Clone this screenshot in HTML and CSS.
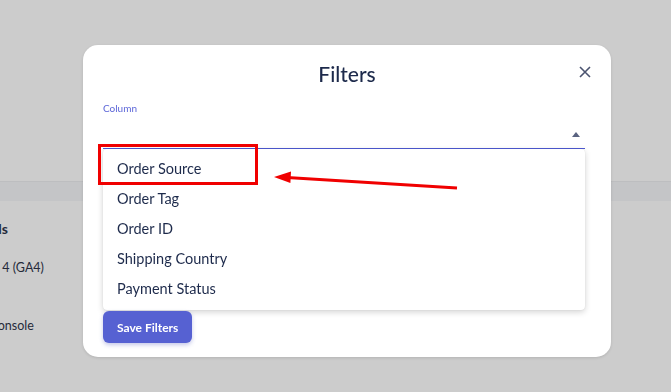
FILE: index.html
```html
<!DOCTYPE html>
<html lang="en">
<head>
    <meta charset="UTF-8">
    <meta name="viewport" content="width=device-width, initial-scale=1.0">
    <title>Filters</title>
    <link rel="stylesheet" href="styles.css">
</head>
<body>
    <div class="page">
        <div class="page-top"></div>
        <div class="page-band"></div>
        <div class="page-content">
            <h3 class="side-title">Analytics Tools</h3>
            <p class="side-item">Google Analytics 4 (GA4)</p>
            <p class="side-item side-item-last">Google Search Console</p>
        </div>
    </div>

    <div class="overlay">
        <div class="modal">
            <div class="modal-head">
                <h2 class="title">Filters</h2>
                <button class="close" aria-label="Close">
                    <svg width="12" height="12" viewBox="0 0 12 12">
                        <path d="M1 1 L11 11 M11 1 L1 11" stroke="#4b5470" stroke-width="1.6" fill="none"/>
                    </svg>
                </button>
            </div>

            <label class="field-label">Column</label>
            <div class="field">
                <span class="caret"></span>
            </div>

            <ul class="menu">
                <li class="menu-item">Order Source</li>
                <li class="menu-item">Order Tag</li>
                <li class="menu-item">Order ID</li>
                <li class="menu-item">Shipping Country</li>
                <li class="menu-item">Payment Status</li>
            </ul>

            <button class="button">Save Filters</button>
        </div>

        <!-- annotation -->
        <div class="mark"></div>
        <svg class="arrow" width="671" height="392" viewBox="0 0 671 392">
            <path d="M457 188 L287 177.6" stroke="#f00000" stroke-width="3" fill="none"/>
            <path d="M274 177 L291 171.5 L290.4 183 Z" fill="#f00000"/>
        </svg>
    </div>
</body>
</html>
```

FILE: styles.css
```css
body {
    margin: 0;
    font-family: 'Lato', 'Liberation Sans', sans-serif;
    background: #cccccc;
    color: #1d2a4b;
    overflow: hidden;
}

.page {
    height: 392px;
}

.page-top {
    height: 181px;
}

.page-band {
    height: 20px;
    background: #c4c5c7;
    border-top: 1px solid #bdbec0;
    box-sizing: border-box;
}

.page-content {
    margin-left: -93px;
    color: #252a3a;
    white-space: nowrap;
}

.side-title {
    width: 101px;
    text-align: right;
    font-size: 14px;
    font-weight: 700;
    margin: 19px 0 0;
    line-height: 18px;
}

.side-item {
    font-size: 12.5px;
    margin: 22px 0 0;
    line-height: 16px;
}

.side-item-last {
    margin-top: 42px;
}

.overlay {
    position: fixed;
    inset: 0;
    padding: 45px 0 0 83px;
}

.modal {
    position: relative;
    width: 528px;
    box-sizing: border-box;
    padding: 14px 26px 14px 20px;
    background: #ffffff;
    border-radius: 15px;
    box-shadow: 0 1px 3px rgba(0, 0, 0, 0.12);
}

.modal-head {
    height: 30px;
    text-align: center;
}

.title {
    margin: 0;
    font-size: 21px;
    line-height: 30px;
    font-weight: 500;
    color: #1d2a4b;
    padding-left: 6px;
}

.close {
    position: absolute;
    top: 21px;
    right: 20px;
    padding: 0;
    border: none;
    background: none;
    width: 12px;
    height: 12px;
    display: flex;
}

.field-label {
    display: block;
    margin-top: 13px;
    font-size: 10px;
    line-height: 12px;
    color: #5c66d8;
}

.field {
    height: 34px;
    border-bottom: 1.5px solid #4f5bd5;
    display: flex;
    justify-content: flex-end;
    align-items: flex-end;
}

.caret {
    width: 0;
    height: 0;
    border-left: 4px solid transparent;
    border-right: 4px solid transparent;
    border-bottom: 5px solid #5a6380;
    margin: 0 5px 11px 0;
}

.menu {
    list-style: none;
    margin: 0;
    padding: 5px 0 6px;
    background: #ffffff;
    border-radius: 4px;
    box-shadow: 0 2px 6px rgba(0, 0, 0, 0.18), 0 0 1px rgba(0, 0, 0, 0.12);
}

.menu-item {
    height: 30px;
    line-height: 29px;
    padding-left: 14px;
    font-size: 14.5px;
    color: #1d2a4b;
}

.button {
    margin-top: 1px;
    height: 32px;
    padding: 0 14px;
    border: none;
    border-radius: 6px;
    background: #5661d2;
    color: #ffffff;
    font-family: 'Lato', 'Liberation Sans', sans-serif;
    font-size: 12px;
    font-weight: 700;
    box-shadow: 0 2px 4px rgba(60, 70, 180, 0.3);
}

.mark {
    position: absolute;
    left: 98px;
    top: 144px;
    width: 160px;
    height: 41px;
    box-sizing: border-box;
    border: 3px solid #f00000;
}

.arrow {
    position: absolute;
    left: 0;
    top: 0;
}
```
